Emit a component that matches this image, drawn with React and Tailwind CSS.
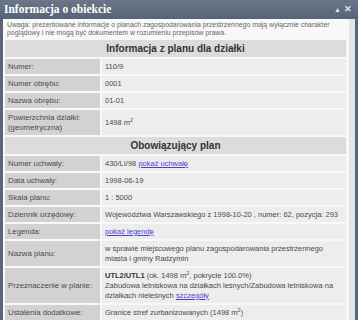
const Sup = () => <sup className="text-[5.5px] leading-none">2</sup>;

const rowsA = [
  { label: "Numer:", value: "110/9" },
  { label: "Numer obrębu:", value: "0001" },
  { label: "Nazwa obrębu:", value: "01-01" },
  {
    label: "Powierzchnia działki: (geometryczna)",
    value: (
      <>
        1498 m<Sup />
      </>
    ),
  },
];

const Link = ({ children }) => (
  <a href="#" className="text-[#4b3fd1] underline">
    {children}
  </a>
);

const rowsB = [
  {
    label: "Numer uchwały:",
    value: (
      <>
        430/LI/98 <Link>pokaż uchwałę</Link>
      </>
    ),
  },
  { label: "Data uchwały:", value: "1998-06-19" },
  { label: "Skala planu:", value: "1 : 5000" },
  {
    label: "Dziennik urzędowy:",
    value: "Województwa Warszawskiego z 1998-10-20 , numer: 62, pozycja: 293",
  },
  { label: "Legenda:", value: <Link>pokaż legendę</Link> },
  {
    label: "Nazwa planu:",
    value: "w sprawie miejscowego planu zagospodarowania przestrzennego miasta i gminy Radzymin",
  },
  {
    label: "Przeznaczenie w planie:",
    value: (
      <>
        <b className="text-[#333]">UTL2/UTL1</b> (ok. 1498 m<Sup />, pokrycie 100.0%)
        <br />
        Zabudowa letniskowa na działkach leśnych/Zabudowa letniskowa na działkach nieleśnych{" "}
        <Link>szczegóły</Link>
      </>
    ),
  },
  {
    label: "Ustalenia dodatkowe:",
    value: (
      <>
        Granice stref zurbanizowanych (1498 m<Sup />)
      </>
    ),
  },
];

const Section = ({ title, rows }) => (
  <>
    <div className="col-span-2 bg-[#dcdcdc] h-[17px] flex items-center justify-center font-bold text-[10px] text-[#333]">
      {title}
    </div>
    {rows.map((r) => (
      <div key={r.label} className="contents">
        <div className="bg-[#d2d2d2] px-[3px] py-[2.5px] leading-[10px] flex items-center text-[#4a4a4a]">
          {r.label}
        </div>
        <div className="bg-[#ededed] pl-[3px] pr-0 py-[2.5px] leading-[10px] flex items-center text-[#4a4a4a] text-[7.5px]">
          <span>{r.value}</span>
        </div>
      </div>
    ))}
  </>
);

export default function App() {
  return (
    <div
      className="w-[358px] h-[320px] overflow-hidden bg-[#5b6678] flex flex-col"
      style={{ fontFamily: '"Liberation Sans", Arial, sans-serif' }}
    >
      <div className="h-[19px] shrink-0 flex items-center justify-between pl-[4px] pr-[6px] bg-gradient-to-b from-[#6b768a] to-[#586376]">
        <span
          className="text-white font-bold text-[11.5px]"
          style={{ fontFamily: '"Liberation Serif", serif' }}
        >
          Informacja o obiekcie
        </span>
        <span className="flex items-center gap-[3px] text-[#dfe3ea] text-[9px] leading-none">
          <span className="text-[7px]">▲</span>
          <span className="font-bold">✕</span>
        </span>
      </div>
      <div className="flex flex-1 min-h-0 pl-[3px] pr-[3px]">
        <div className="flex-1 bg-[#f8f8f8] pl-[2px] pr-[3px] text-[7.8px]">
          <p className="text-[#666] text-[6.9px] leading-[8px] px-[2px] pt-[2px] pb-[3px]">
            Uwaga: prezentowane informacje o planach zagospodarowania przestrzennego mają wyłącznie charakter poglądowy i nie mogą być dokumentem w rozumieniu przepisów prawa.
          </p>
          <div className="grid grid-cols-[95px_1fr] gap-[2px]">
            <Section title="Informacja z planu dla działki" rows={rowsA} />
            <Section title="Obowiązujący plan" rows={rowsB} />
          </div>
        </div>
        <div className="w-[6px] bg-[#e3e5ea]" />
      </div>
    </div>
  );
}
